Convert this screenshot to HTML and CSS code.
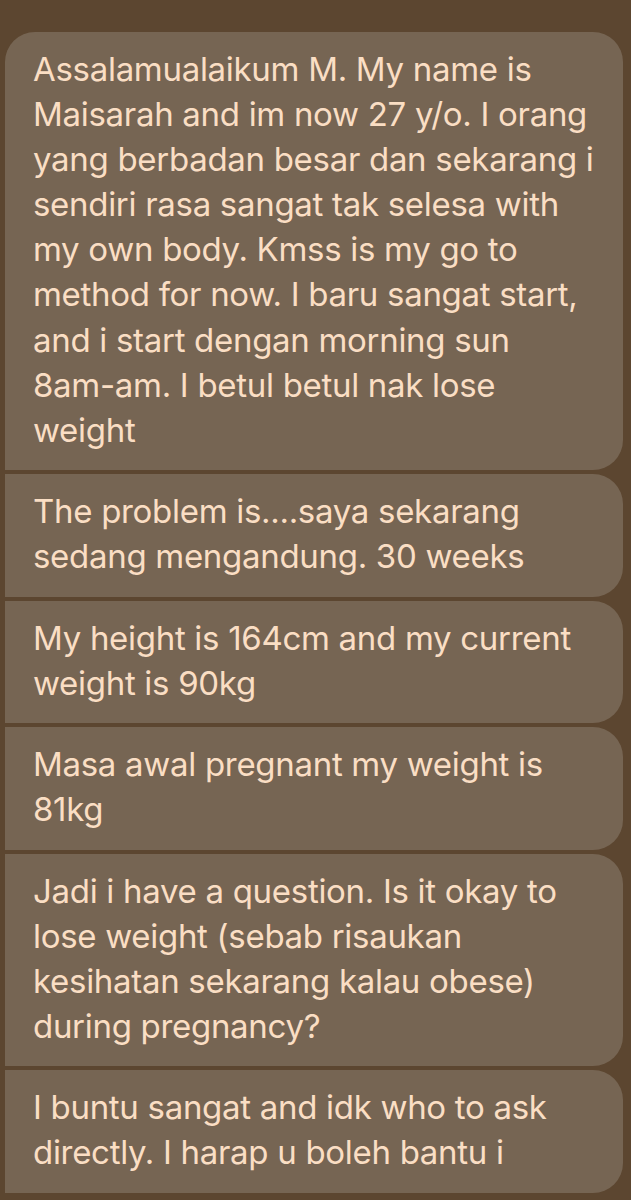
FILE: index.html
```html
<!DOCTYPE html>
<html lang="ms">
<head>
<meta charset="utf-8">
<title>Messages</title>
<link rel="stylesheet" href="styles.css">
</head>
<body>
<div class="thread">
  <div class="bubble first">Assalamualaikum M. My name is<br>Maisarah and im now 27 y/o. I orang<br>yang berbadan besar dan sekarang i<br>sendiri rasa sangat tak selesa with<br>my own body. Kmss is my go to<br>method for now. I baru sangat start,<br>and i start dengan morning sun<br>8am-am. I betul betul nak lose<br>weight</div>
  <div class="bubble">The problem is....saya sekarang<br>sedang mengandung. 30 weeks</div>
  <div class="bubble">My height is 164cm and my current<br>weight is 90kg</div>
  <div class="bubble">Masa awal pregnant my weight is<br>81kg</div>
  <div class="bubble">Jadi i have a question. Is it okay to<br>lose weight (sebab risaukan<br>kesihatan sekarang kalau obese)<br>during pregnancy?</div>
  <div class="bubble">I buntu sangat and idk who to ask<br>directly. I harap u boleh bantu i</div>
</div>
</body>
</html>
```

FILE: styles.css
```css
html, body {
  margin: 0;
  padding: 0;
  background: #5c4630;
}
body {
  width: 631px;
  height: 1200px;
  overflow: hidden;
}
.thread {
  display: flex;
  flex-direction: column;
  gap: 4px;
  padding: 32px 8px 0 5px;
}
.bubble {
  background: #766553;
  color: #fadec4;
  font-family: Inter, "Noto Sans", sans-serif;
  font-size: 33px;
  letter-spacing: -0.3px;
  line-height: 45.1px;
  padding: 15px 20px 17.3px 28px;
  border-radius: 0 30px 30px 0;
  white-space: nowrap;
}
.bubble.first {
  border-top-left-radius: 30px;
}
```
